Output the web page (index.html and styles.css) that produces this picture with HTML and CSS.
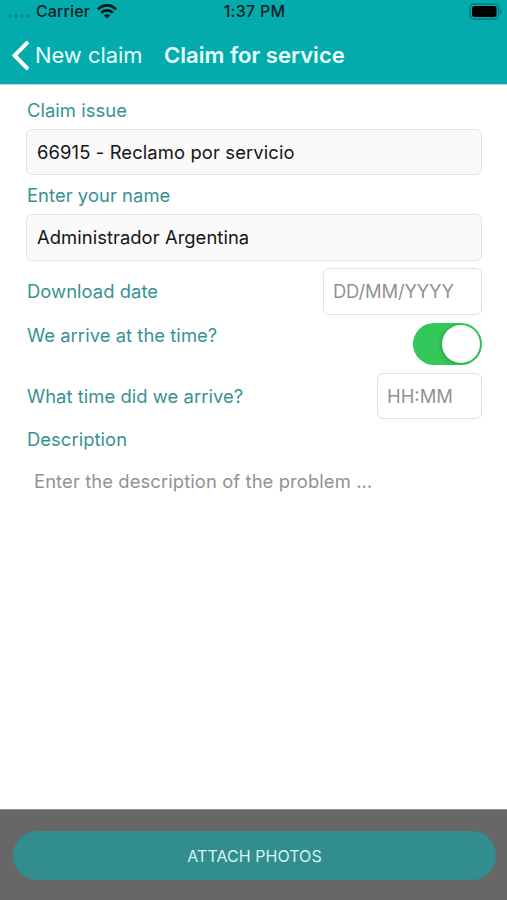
FILE: index.html
```html
<!DOCTYPE html>
<html lang="en">
<head>
<meta charset="utf-8">
<title>Claim for service</title>
<link rel="stylesheet" href="styles.css">
</head>
<body>
<header class="header">
  <div class="status">
    <div class="status-left">
      <span class="dots"><i></i><i></i><i></i><i></i></span>
      <span class="carrier">Carrier</span>
      <svg class="wifi" width="20" height="15" viewBox="0 0 20 15" fill="none" stroke="#061719" stroke-width="2.8"><path d="M1 5.4C6 .1 14 .1 19 5.4"/><path d="M4.2 8.8c3.3-3.2 8.3-3.2 11.6 0"/><path d="M10 14.5 6.9 11.4c1.8-1.6 4.4-1.6 6.2 0Z" fill="#061719" stroke="none"/></svg>
    </div>
    <span class="clock">1:37 PM</span>
    <svg class="battery" width="33" height="17" viewBox="0 0 33 17"><rect x="1" y="1" width="28.5" height="15" rx="4" fill="none" stroke="#087778" stroke-width="1.4"/><rect x="3" y="3" width="24.5" height="11" rx="2.5" fill="#000"/><path d="M31 6v5c2-1 2-4 0-5Z" fill="#087778"/></svg>
  </div>
  <nav class="nav">
    <svg class="chevron" width="17" height="29" viewBox="0 0 17 29" fill="none" stroke="#fff" stroke-width="4.1" stroke-linecap="round"><path d="M14.8 2.1 2.6 14.5 14.8 26.9"/></svg>
    <span class="back">New claim</span>
    <h1 class="title">Claim for service</h1>
  </nav>
</header>
<main class="form">
  <div class="label l-issue"><span>Claim issue</span></div>
  <div class="field filled"><span class="v-issue">66915 - Reclamo por servicio</span></div>
  <div class="label l-name"><span>Enter your name</span></div>
  <div class="field filled name"><span class="v-name">Administrador Argentina</span></div>
  <div class="row row-date"><div class="label">Download date</div><div class="field date"><span>DD/MM/YYYY</span></div></div>
  <div class="row row-toggle"><div class="label">We arrive at the time?</div><div class="toggle"><i></i></div></div>
  <div class="row row-time"><div class="label">What time did we arrive?</div><div class="field time"><span>HH:MM</span></div></div>
  <div class="label l-desc"><span>Description</span></div>
  <div class="description"><span>Enter the description of the problem ...</span></div>
</main>
<footer class="footer"><div class="attach"><span>ATTACH PHOTOS</span></div></footer>
</body>
</html>
```
FILE: styles.css
```css
* { box-sizing: border-box; }
body {
  margin: 0;
  height: 900px;
  display: flex;
  flex-direction: column;
  background: #fff;
  font-family: Inter, "Liberation Sans", sans-serif;
  font-size: 18.4px;
  line-height: 24px;
  white-space: nowrap;
  overflow: hidden;
}
.header { height: 85px; background: #03abad; border-bottom: 1px solid #b5dcdd; }
.status {
  height: 24px;
  padding: 0 5px 0 8px;
  display: grid;
  grid-template-columns: 1fr auto 1fr;
  align-items: center;
  font-size: 16px;
  font-weight: 500;
  line-height: 22px;
  color: #062224;
}
.status-left { display: flex; align-items: center; height: 22px; margin-top: -2px; }
.dots { display: flex; gap: 2px; width: 28px; padding-top: 9px; }
.dots i { width: 4px; height: 4px; border-radius: 2px; background: #078b8d; }
.carrier { letter-spacing: .1px; }
.clock { letter-spacing: .25px; margin: -2px 1px 0 0; }
.wifi { margin-left: 7px; }
.battery { justify-self: end; margin-top: -2px; }
.nav { height: 60px; display: flex; align-items: center; padding: 2px 0 0 12px; color: #e9ffff; }
.chevron { flex: none; }
.back { margin-left: 6px; width: 129px; font-size: 21.9px; }
.title { margin: 0; font-size: 22.1px; font-weight: 600; }
.form { flex: 1; padding: 0 25px 0 26px; }
.label { color: #389292; padding-left: 1px; letter-spacing: .05px; }
.l-issue { padding-top: 13px; height: 44px; }
.l-name { padding-top: 8px; height: 39px; }
.field {
  height: 46px;
  border: 1px solid #e2e2e2;
  border-radius: 6px;
  display: flex;
  align-items: center;
  padding-left: 10px;
  background: #fff;
  color: #929292;
}
.filled { background: #fafafa; color: #151515; }
.name { height: 47px; padding-bottom: 1px; }
.v-issue { letter-spacing: .12px; }
.v-name { letter-spacing: .05px; }
.row { display: flex; justify-content: space-between; align-items: center; }
.row-date { margin-top: 7px; height: 47px; }
.row-date .label { padding-bottom: 1px; }
.date { height: 47px; width: 159px; padding-left: 9px; padding-bottom: 1px; letter-spacing: -.15px; }
.row-toggle { height: 58px; align-items: flex-start; padding-top: 8px; }
.toggle {
  width: 69px;
  height: 42px;
  border-radius: 21px;
  background: #34c759;
  display: flex;
  justify-content: flex-end;
  padding: 2px;
}
.toggle i { width: 38px; height: 38px; border-radius: 50%; background: #fff; box-shadow: -1px 1px 4px rgba(0, 0, 0, .2); }
.row-time { height: 46px; }
.time { width: 105px; padding-left: 9px; }
.l-desc { padding-top: 8px; height: 43px; }
.description { padding: 7px 0 0 8px; color: #929292; letter-spacing: .1px; }
.footer { height: 91px; padding: 21px 11px 0 13px; background: #676767; border-top: 1px solid #929292; }
.attach {
  height: 49px;
  border-radius: 25px;
  background: #318d8e;
  display: flex;
  align-items: center;
  justify-content: center;
  font-size: 16px;
  letter-spacing: .05px;
  color: #d4f4f5;
}
```
